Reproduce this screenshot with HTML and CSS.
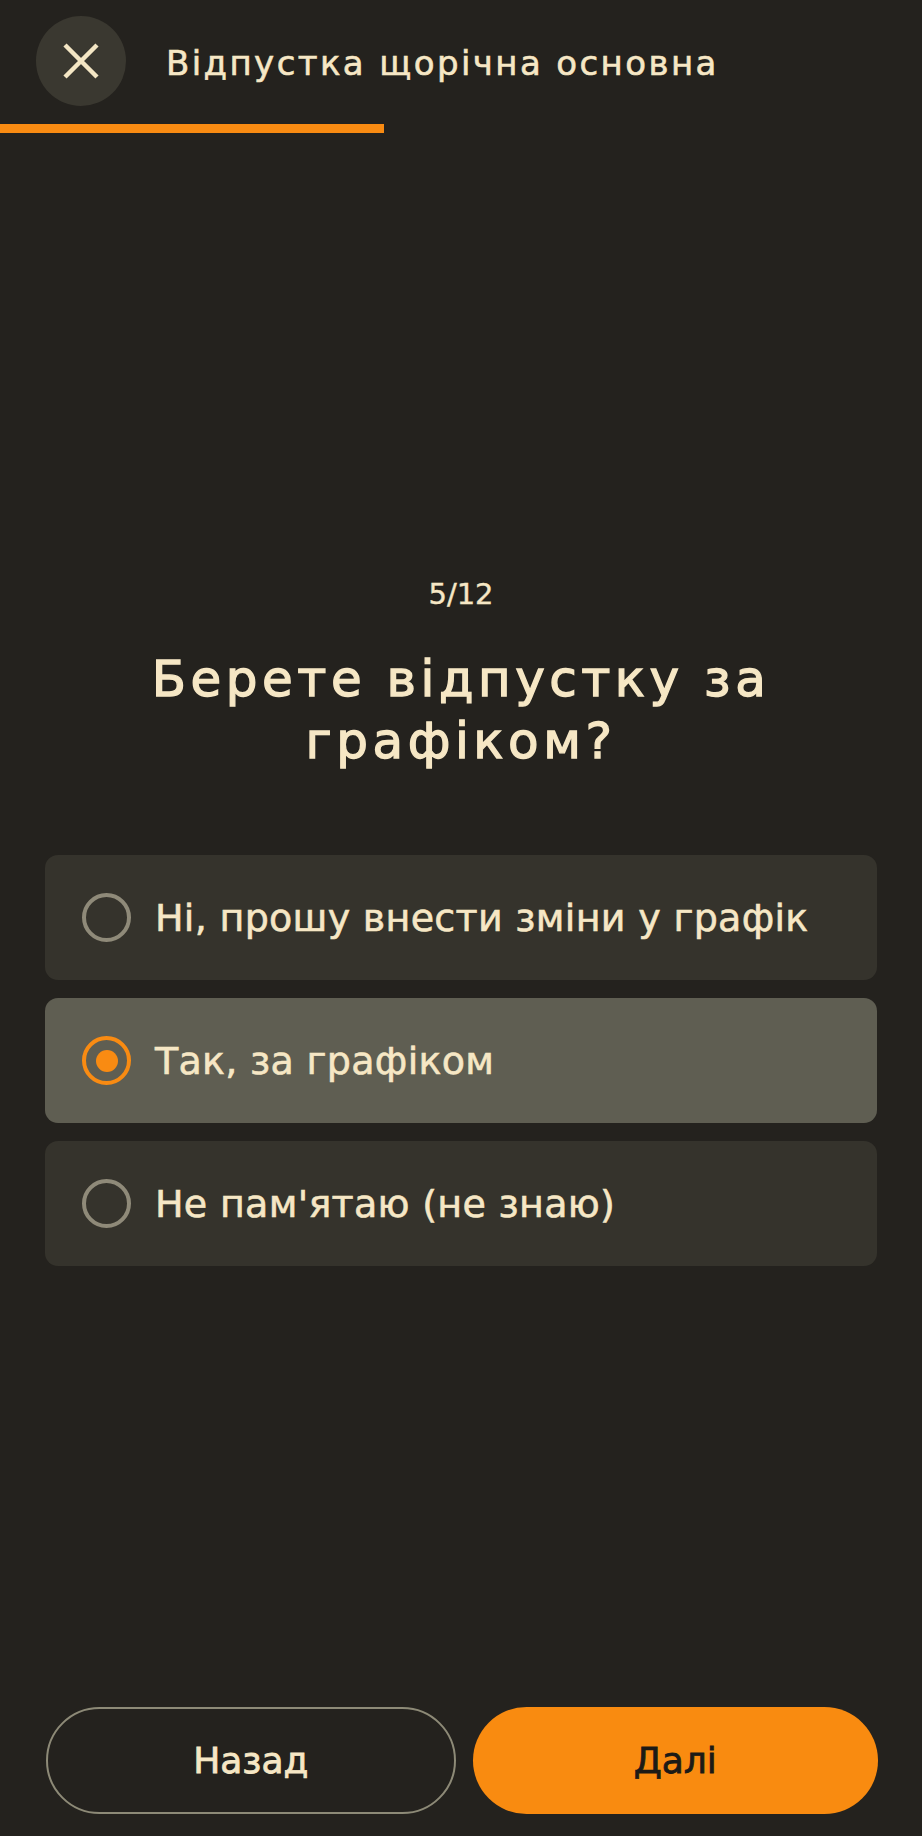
FILE: index.html
```html
<!DOCTYPE html>
<html lang="uk">
<head>
    <meta charset="UTF-8">
    <meta name="viewport" content="width=device-width, initial-scale=1.0">
    <title>Відпустка щорічна основна</title>
    <link rel="stylesheet" href="styles.css">
</head>
<body>
    <div class="screen">
        <div class="top">
            <button class="close" aria-label="Закрити">
                <svg width="36" height="36" viewBox="0 0 36 36">
                    <path d="M2 2 L34 34 M34 2 L2 34" stroke="#f4e6c4" stroke-width="4.5" fill="none"/>
                </svg>
            </button>
            <h1 class="top-title">Відпустка щорічна основна</h1>
        </div>
        <div class="progress">
            <div class="progress-fill" style="width: 41.667%"></div>
        </div>

        <div class="quiz">
            <div class="counter">5/12</div>
            <h2 class="question">Берете відпустку за графіком?</h2>

            <form name="answer" class="options">
                <label class="option">
                    <input type="radio" name="grafik" value="change">
                    <span class="radio"></span>
                    <span class="option-text">Ні, прошу внести зміни у графік</span>
                </label>
                <label class="option">
                    <input type="radio" name="grafik" value="yes" checked>
                    <span class="radio"></span>
                    <span class="option-text">Так, за графіком</span>
                </label>
                <label class="option">
                    <input type="radio" name="grafik" value="unknown">
                    <span class="radio"></span>
                    <span class="option-text">Не пам'ятаю (не знаю)</span>
                </label>
            </form>
        </div>

        <div class="nav">
            <button class="btn btn-back">Назад</button>
            <button class="btn btn-next">Далі</button>
        </div>
    </div>
</body>
</html>
```

FILE: styles.css
```css
body {
    margin: 0;
    background-color: #24221e;
    font-family: "DejaVu Sans", "Noto Sans", sans-serif;
    color: #f6e7c5;
}

.screen {
    height: 100vh;
    display: flex;
    flex-direction: column;
}

/* header */
.top {
    display: flex;
    align-items: center;
    gap: 40px;
    padding: 16px 0 0 36px;
}
.close {
    width: 90px;
    height: 90px;
    border: none;
    border-radius: 50%;
    background-color: #3a3830;
    display: flex;
    align-items: center;
    justify-content: center;
    padding: 0;
    flex-shrink: 0;
}
.top-title {
    margin: 0;
    font-size: 34px;
    font-weight: normal;
    letter-spacing: 2.4px;
    -webkit-text-stroke: 0.6px currentColor;
    padding-top: 4px;
}
.progress {
    margin-top: 18px;
    height: 9px;
}
.progress-fill {
    height: 100%;
    background-color: #f98b12;
}

/* question */
.quiz {
    margin: 443px 45px 0;
}
.counter {
    text-align: center;
    font-size: 29px;
    line-height: 36px;
    -webkit-text-stroke: 0.4px currentColor;
}
.question {
    margin: 36px 0 0;
    text-align: center;
    font-size: 50px;
    line-height: 62px;
    font-weight: normal;
    letter-spacing: 4.5px;
    -webkit-text-stroke: 1.3px currentColor;
}

.options {
    margin-top: 83px;
    display: flex;
    flex-direction: column;
    gap: 18px;
}
.option {
    height: 125px;
    box-sizing: border-box;
    display: flex;
    align-items: center;
    gap: 24px;
    padding-left: 37px;
    border-radius: 13px;
    background-color: #35332c;
}
.option input {
    display: none;
}
.radio {
    width: 49px;
    height: 49px;
    box-sizing: border-box;
    border: 4px solid #8f8a79;
    border-radius: 50%;
    display: flex;
    align-items: center;
    justify-content: center;
    flex-shrink: 0;
}
.option-text {
    font-size: 38px;
    line-height: 46px;
    letter-spacing: 0.3px;
    -webkit-text-stroke: 0.6px currentColor;
}
.option:has(input:checked) {
    background-color: #5f5e52;
}
.option input:checked + .radio {
    border-color: #f98b12;
}
.option input:checked + .radio::after {
    content: "";
    width: 22px;
    height: 22px;
    border-radius: 50%;
    background-color: #f98b12;
}

/* bottom buttons */
.nav {
    margin: auto 44px 22px 46px;
    display: flex;
    gap: 17px;
}
.btn {
    flex: 1;
    height: 107px;
    border-radius: 54px;
    font-family: inherit;
    font-size: 36px;
    padding: 0;
    -webkit-text-stroke: 0.8px currentColor;
}
.btn-back {
    background-color: transparent;
    border: 2px solid #8d8a77;
    color: #f6e7c5;
}
.btn-next {
    background-color: #f98b10;
    border: none;
    color: #1c1a16;
}
```
